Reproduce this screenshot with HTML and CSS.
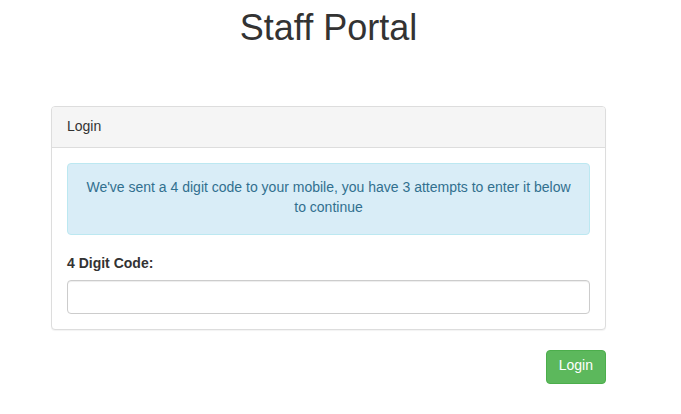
FILE: index.html
```html
<!DOCTYPE html>
<html>
<head>
<meta charset="utf-8">
<title>Staff Portal</title>
<link rel="stylesheet" href="styles.css">
</head>
<body>
<div class="wrap">
  <h1 class="title">Staff Portal</h1>
  <div class="panel">
    <div class="panel-heading">Login</div>
    <div class="panel-body">
      <div class="alert">We've sent a 4 digit code to your mobile, you have 3 attempts to enter it below to continue</div>
      <label class="label" for="code">4 Digit Code:</label>
      <input class="input" id="code" type="text">
    </div>
  </div>
  <div class="actions">
    <button class="btn" type="button">Login</button>
  </div>
</div>
</body>
</html>
```

FILE: styles.css
```css
* { box-sizing: border-box; }
html, body { margin: 0; padding: 0; background: #fff; }
body {
  font-family: "Liberation Sans", Arial, sans-serif;
  font-size: 14px;
  line-height: 20px;
  color: #333;
}
.wrap {
  width: 555px;
  margin-left: 51px;
  padding-top: 8px;
}
.title {
  margin: 0 0 58px;
  font-size: 36px;
  font-weight: 500;
  line-height: 40px;
  text-align: center;
  color: #333;
}
.panel {
  border: 1px solid #ddd;
  border-radius: 4px;
  background: #fff;
  box-shadow: 0 1px 1px rgba(0,0,0,.05);
  margin-bottom: 20px;
}
.panel-heading {
  background: #f5f5f5;
  border-bottom: 1px solid #ddd;
  border-radius: 3px 3px 0 0;
  padding: 9px 15px 11px;
}
.panel-body { padding: 15px; }
.alert {
  background: #d9edf7;
  border: 1px solid #bce8f1;
  color: #31708f;
  border-radius: 4px;
  padding: 13px 15px 17px;
  text-align: center;
  margin-bottom: 18px;
}
.label {
  display: block;
  font-weight: bold;
  margin-bottom: 7px;
}
.input {
  display: block;
  width: 100%;
  height: 34px;
  padding: 6px 12px;
  border: 1px solid #ccc;
  border-radius: 4px;
  font: inherit;
  box-shadow: inset 0 1px 1px rgba(0,0,0,.075);
}
.actions {
  display: flex;
  justify-content: flex-end;
}
.btn {
  height: 34px;
  padding: 4px 12px 8px;
  font: inherit;
  color: #fff;
  background: #5cb85c;
  border: 1px solid #4cae4c;
  border-radius: 4px;
}
```
